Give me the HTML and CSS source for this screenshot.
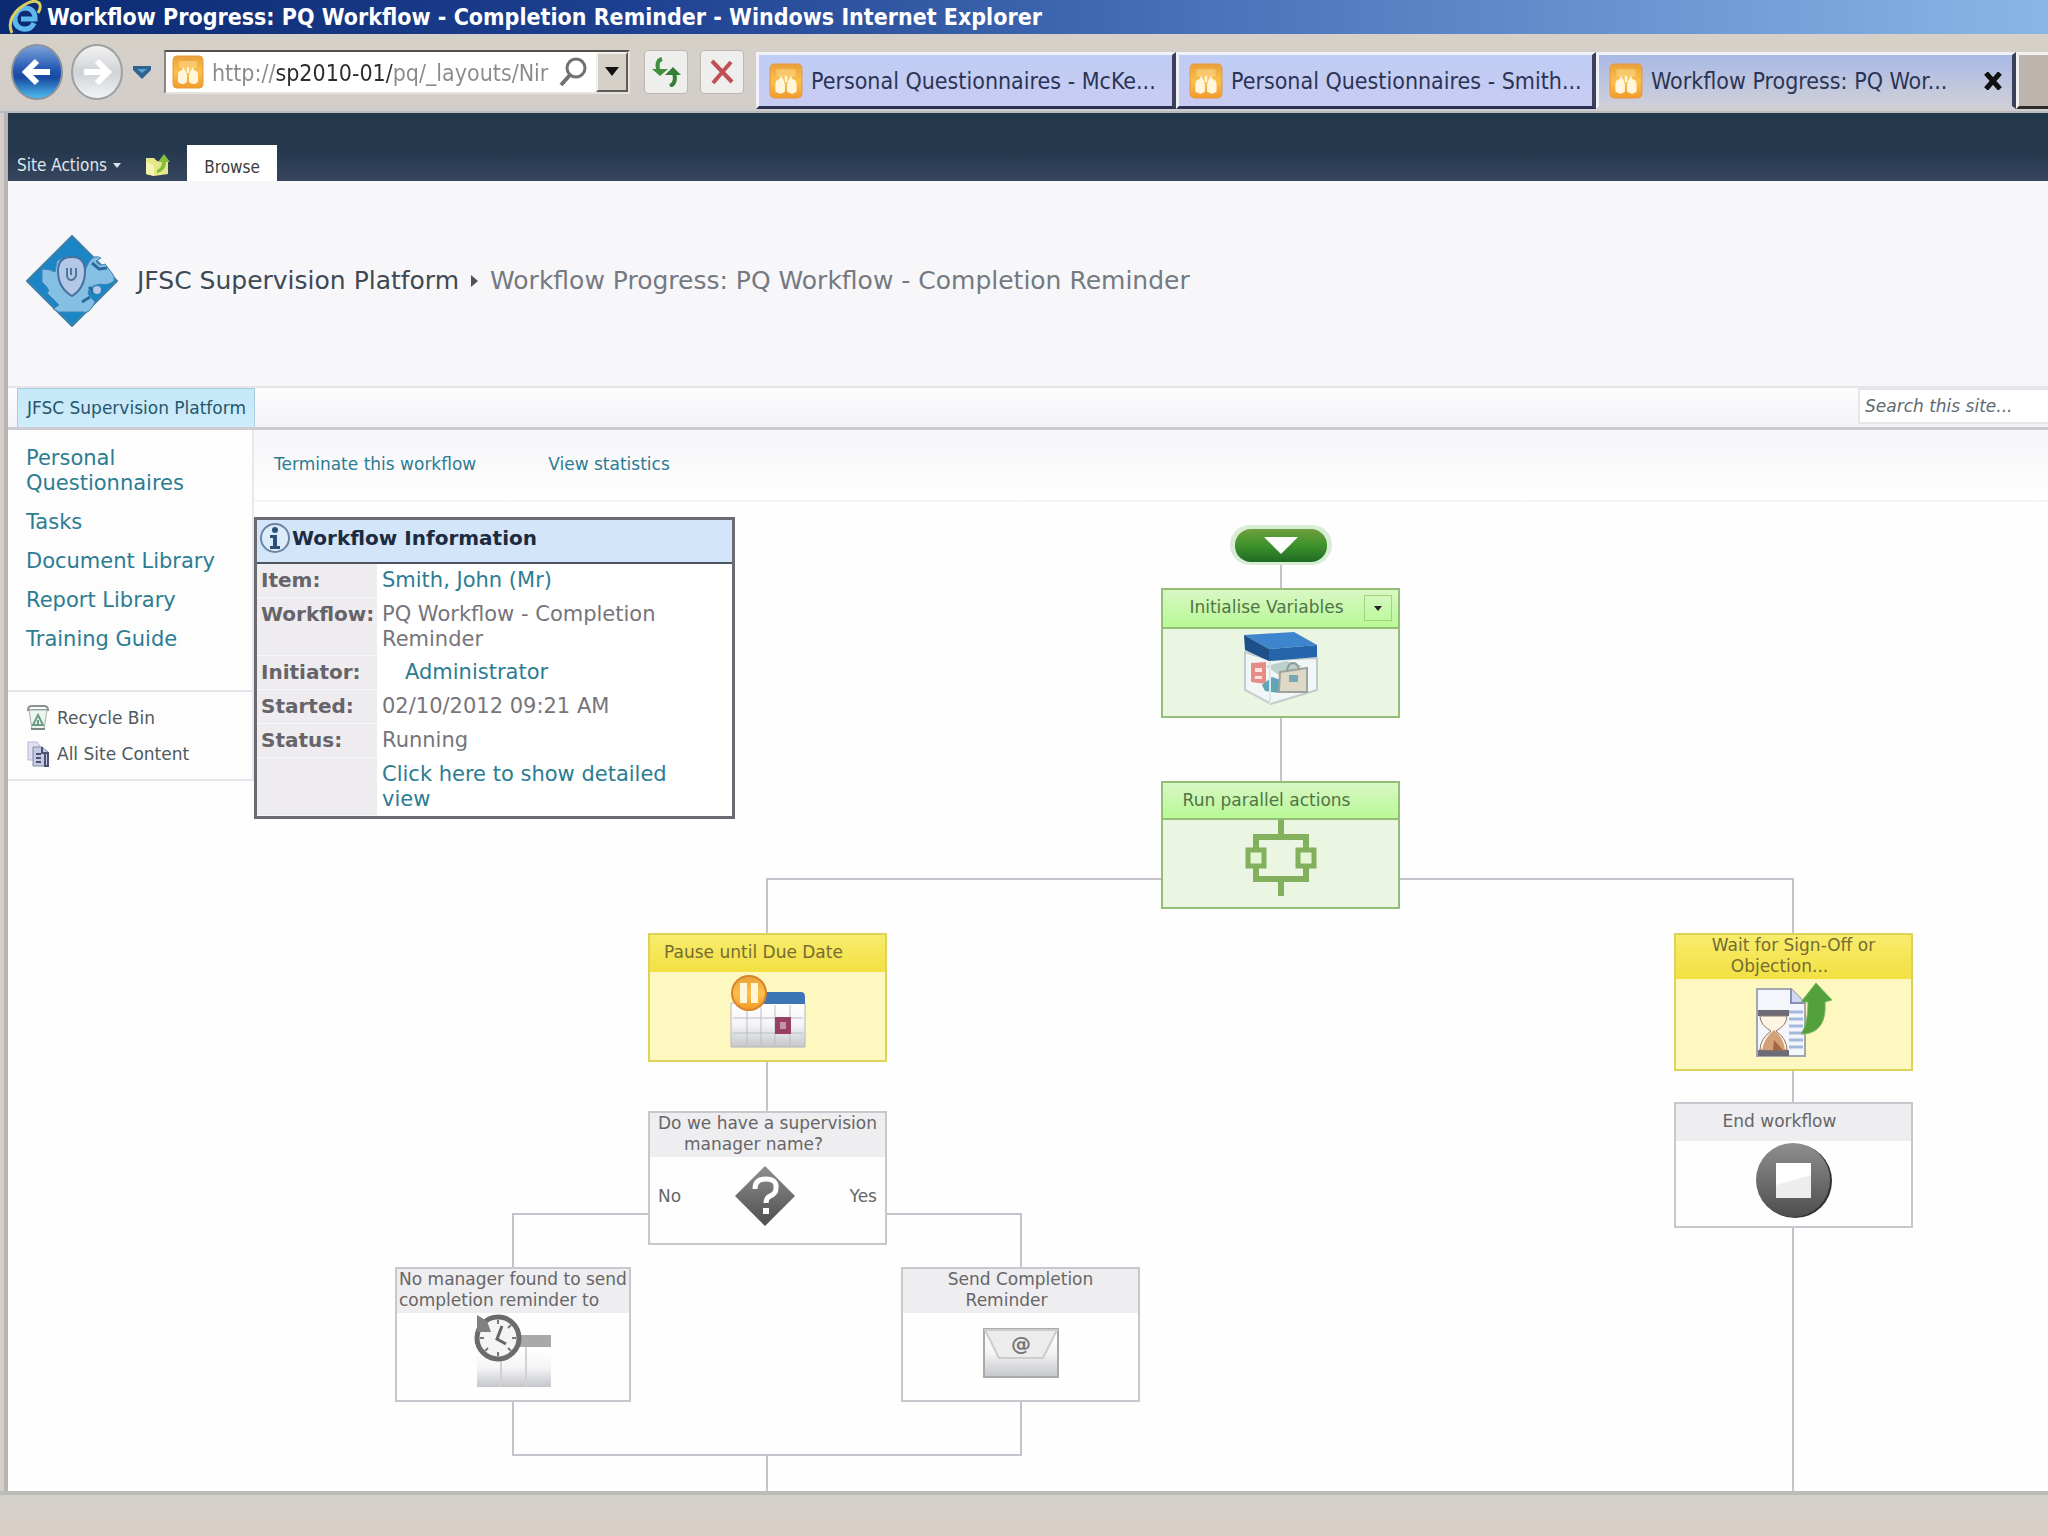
FILE: index.html
```html
<!DOCTYPE html>
<html lang="en">
<head>
    <meta charset="UTF-8">
    <meta name="viewport" content="width=device-width, initial-scale=1.0">
    <title>Workflow Progress: PQ Workflow - Completion Reminder</title>
    <link rel="stylesheet" href="styles.css">
</head>
<body>

<!-- shared gradients and the site icon -->
<svg class="defs" width="0" height="0" aria-hidden="true">
    <defs>
        <linearGradient id="g-orange" x1="0" y1="0" x2="0" y2="1">
            <stop offset="0" stop-color="#e9a03c"/>
            <stop offset="0.5" stop-color="#fbc04a"/>
            <stop offset="1" stop-color="#f39a2c"/>
        </linearGradient>
        <linearGradient id="g-back" x1="0" y1="0" x2="0" y2="1">
            <stop offset="0" stop-color="#7da4dc"/>
            <stop offset="0.45" stop-color="#2458b4"/>
            <stop offset="0.6" stop-color="#174a9f"/>
            <stop offset="1" stop-color="#4fc0f2"/>
        </linearGradient>
        <linearGradient id="g-fwd" x1="0" y1="0" x2="0" y2="1">
            <stop offset="0" stop-color="#f4f4f4"/>
            <stop offset="0.5" stop-color="#cfd2d6"/>
            <stop offset="1" stop-color="#f3f5f7"/>
        </linearGradient>
        <linearGradient id="g-green" x1="0" y1="0" x2="0" y2="1">
            <stop offset="0" stop-color="#6f9f3c"/>
            <stop offset="0.5" stop-color="#3d922b"/>
            <stop offset="1" stop-color="#1f6a24"/>
        </linearGradient>
        <linearGradient id="g-grey" x1="0" y1="0" x2="0" y2="1">
            <stop offset="0" stop-color="#8e8e8e"/>
            <stop offset="1" stop-color="#4e4e4e"/>
        </linearGradient>
        <linearGradient id="g-paper" x1="0" y1="0" x2="0" y2="1">
            <stop offset="0" stop-color="#ffffff"/>
            <stop offset="0.5" stop-color="#f4f4f6"/>
            <stop offset="1" stop-color="#c4c6cb"/>
        </linearGradient>
    </defs>
    <symbol id="site-icon" viewBox="0 0 32 34">
        <rect x="1" y="1" width="30" height="32" rx="4" fill="url(#g-orange)" stroke="#e8983a" stroke-width="1"/>
        <path d="M7 6h18v7h-4l-5 4-5-4H7z" fill="#fbd27c" opacity="0.7"/>
        <path d="M6 27v-7q0-4 4-5l1-3 2 3q2 2 2 5v7q-4 4-9 0z" fill="#fff6dc"/>
        <path d="M17 27v-7q0-3 2-5l2-3 1 3q4 1 4 5v7q-4 4-9 0z" fill="#fff6dc"/>
        <path d="M15 12h2v6h-2z" fill="#fff6dc"/>
    </symbol>
</svg>

<div class="titlebar">
    <svg width="34" height="34" viewBox="0 0 34 34" aria-hidden="true">
        <path d="M26 23q-3 7-11 6-9-2-8-12 2-9 11-9 9 1 9 11H13" fill="none" stroke="#5cb8ee" stroke-width="5"/>
        <path d="M4 33Q-2 20 12 8 25-2 31 3q3 4-1 10" fill="none" stroke="#d9cf5a" stroke-width="3"/>
    </svg>
    <span>Workflow Progress: PQ Workflow - Completion Reminder - Windows Internet Explorer</span>
</div>

<div class="toolbar">
    <button class="nav-btn" aria-label="Back">
        <svg width="54" height="56" viewBox="0 0 54 56">
            <ellipse cx="27" cy="28" rx="25" ry="27" fill="url(#g-back)" stroke="#8a929e" stroke-width="2"/>
            <path d="M40 28H17M27 17L16 28l11 11" fill="none" stroke="#fff" stroke-width="6"/>
        </svg>
    </button>
    <button class="nav-btn" aria-label="Forward">
        <svg width="54" height="56" viewBox="0 0 54 56">
            <ellipse cx="27" cy="28" rx="25" ry="27" fill="url(#g-fwd)" stroke="#9d9fa3" stroke-width="2"/>
            <path d="M14 28h23M27 17l11 11-11 11" fill="none" stroke="#fff" stroke-width="6"/>
        </svg>
    </button>
    <button class="history-btn" aria-label="Recent pages">
        <svg width="20" height="14" viewBox="0 0 20 14">
            <path d="M1 1h18v4l-9 9-9-9z" fill="#2f6391"/>
            <path d="M5 4h10l-5 4z" fill="#5aa3cf"/>
        </svg>
    </button>
    <div class="address">
        <svg class="address-icon" width="32" height="34"><use href="#site-icon"/></svg>
        <input class="address-input" type="text" aria-label="Address" value="http://sp2010-01/pq/_layouts/Nir">
        <svg width="30" height="30" viewBox="0 0 30 30" aria-hidden="true">
            <circle cx="18" cy="11" r="9" fill="none" stroke="#74706f" stroke-width="3"/>
            <path d="M12 18L3 28" stroke="#74706f" stroke-width="4"/>
        </svg>
        <button class="address-drop" aria-label="Show addresses">
            <svg width="14" height="9" viewBox="0 0 14 9"><path d="M0 0h14L7 9z" fill="#111"/></svg>
        </button>
    </div>
    <button class="tool-btn" aria-label="Refresh">
        <svg width="32" height="30" viewBox="0 0 32 30">
            <path d="M12 2Q5 4 9 15" fill="none" stroke="#3f8f3c" stroke-width="4"/>
            <path d="M2 12h16l-8 7z" fill="#3f8f3c"/>
            <path d="M20 29q7-3 4-13" fill="none" stroke="#357f34" stroke-width="4"/>
            <path d="M15 18l8-8 8 8z" fill="#357f34"/>
        </svg>
    </button>
    <button class="tool-btn" aria-label="Stop">
        <svg width="26" height="26" viewBox="0 0 26 26">
            <path d="M3 2l20 21M22 3L4 24" stroke="#c24d55" stroke-width="4"/>
        </svg>
    </button>
    <div class="tabs">
        <a class="tab" href="#"><svg width="34" height="36"><use href="#site-icon"/></svg><span>Personal Questionnaires - McKe...</span></a>
        <a class="tab" href="#"><svg width="34" height="36"><use href="#site-icon"/></svg><span>Personal Questionnaires - Smith...</span></a>
        <div class="tab tab-active">
            <svg width="34" height="36"><use href="#site-icon"/></svg>
            <span>Workflow Progress: PQ Wor...</span>
            <button class="tab-close" aria-label="Close tab">
                <svg width="18" height="18" viewBox="0 0 18 18"><path d="M2 1l14 16M16 1L2 17" stroke="#111" stroke-width="5"/></svg>
            </button>
        </div>
        <button class="tab-new" aria-label="New tab"></button>
    </div>
</div>

<div class="page">
    <div class="ribbon">
        <button class="site-actions">Site Actions
            <svg width="8" height="5" viewBox="0 0 8 5"><path d="M0 0h8L4 5z" fill="#dfe5ec"/></svg>
        </button>
        <button class="ribbon-icon" aria-label="Navigate up">
            <svg width="26" height="24" viewBox="0 0 26 24">
                <path d="M1 5h8l3 3h11v13l-14 2-8-2z" fill="#e4e887"/>
                <path d="M1 9l8 3v11l-8-2z" fill="#f6f4b2"/>
                <path d="M12 17q5-2 5-8h-4l6-8 6 8h-4q0 9-9 11z" fill="#86bd3f"/>
            </svg>
        </button>
        <a class="ribbon-tab" href="#">Browse</a>
    </div>

    <div class="header">
        <svg class="logo" width="92" height="92" viewBox="0 0 92 92" aria-hidden="true">
            <path d="M46 1l45 45-45 45L1 46z" fill="#1a86c5" stroke="#3f7fa8" stroke-width="2"/>
            <path d="M16 34q8 0 13 3l2-11q12-9 25 0l3 9 4-8q5-8 12-4l-5 3q3 6 9 3l7 9q3 3 2 8-6 5-14 3-12 2-12 10l7 8q-6 13-12 10H33l-6-3 6-4-12-12q5-2-5-11z" fill="#85bfe3" stroke="#3d83b5" stroke-width="1"/>
            <path d="M46 22q13 0 13 14 0 17-13 25-14-8-14-25 0-14 14-14z" fill="#b2c8e6" stroke="#456f9e" stroke-width="2"/>
            <path d="M41 33v8q1 4 4 4t5-4v-8M45 33v7" fill="none" stroke="#51779f" stroke-width="2"/>
            <path d="M66 28l7 6 8-1M63 52l6 6 6-4M56 67l8-5" fill="none" stroke="#2a6b9e" stroke-width="3"/>
            <circle cx="71" cy="55" r="4" fill="#b2c8e6"/>
        </svg>
        <div class="breadcrumb">
            <a href="#">JFSC Supervision Platform</a>
            <svg width="7" height="12" viewBox="0 0 7 12"><path d="M0 0l7 6-7 6z" fill="#4c535c"/></svg>
            <span>Workflow Progress: PQ Workflow - Completion Reminder</span>
        </div>
    </div>

    <div class="topnav">
        <a class="topnav-item" href="#">JFSC Supervision Platform</a>
        <input class="search" type="text" aria-label="Search this site" placeholder="Search this site...">
    </div>

    <div class="main">
        <div class="sidebar">
            <ul class="side-links">
                <li><a href="#">Personal Questionnaires</a></li>
                <li><a href="#">Tasks</a></li>
                <li><a href="#">Document Library</a></li>
                <li><a href="#">Report Library</a></li>
                <li><a href="#">Training Guide</a></li>
            </ul>
            <ul class="side-tools">
                <li>
                    <svg width="22" height="26" viewBox="0 0 22 26">
                        <path d="M1 5q0-4 4-4h12q4 0 4 4z" fill="#fff" stroke="#8b9396" stroke-width="2"/>
                        <path d="M2 5h18l-3 19H5z" fill="#edf5f0" stroke="#a3b0ab" stroke-width="1"/>
                        <path d="M11 10l5 10H6zM11 15v4" fill="none" stroke="#6b9c80" stroke-width="2"/>
                        <path d="M4 24h14" stroke="#7c8886" stroke-width="2"/>
                    </svg>
                    <a href="#">Recycle Bin</a>
                </li>
                <li>
                    <svg width="22" height="26" viewBox="0 0 22 26">
                        <path d="M1 1h9l3 4v14H1z" fill="#dfe1f1" stroke="#b4b8d4"/>
                        <path d="M6 6h9l6 5v14H6z" fill="#c5c9e2" stroke="#8287ab"/>
                        <path d="M15 6v6h6v13h-3V13M9 13h5M9 17h5M9 21h5" fill="none" stroke="#4d5274" stroke-width="2"/>
                    </svg>
                    <a href="#">All Site Content</a>
                </li>
            </ul>
        </div>

        <div class="content">
            <div class="actions">
                <a href="#">Terminate this workflow</a>
                <a href="#">View statistics</a>
            </div>

            <div class="canvas">
                <div class="info">
                    <div class="info-title">
                        <svg width="32" height="32" viewBox="0 0 32 32" aria-hidden="true">
                            <circle cx="16" cy="16" r="14" fill="#dcecfb" stroke="#6b84a3" stroke-width="2"/>
                            <circle cx="16" cy="8" r="3" fill="#2b5079"/>
                            <path d="M11 13h7v11h3v3H11v-3h3v-8h-3z" fill="#2b5079"/>
                        </svg>
                        Workflow Information
                    </div>
                    <table class="info-table">
                        <tr><th>Item:</th><td><a href="#">Smith, John (Mr)</a></td></tr>
                        <tr><th>Workflow:</th><td>PQ Workflow - Completion Reminder</td></tr>
                        <tr><th>Initiator:</th><td class="initiator"><a href="#">Administrator</a></td></tr>
                        <tr><th>Started:</th><td>02/10/2012 09:21 AM</td></tr>
                        <tr><th>Status:</th><td>Running</td></tr>
                        <tr><th></th><td><a href="#">Click here to show detailed view</a></td></tr>
                    </table>
                </div>

                <!-- connectors between the actions -->
                <svg class="lines" width="1794" height="989" aria-hidden="true">
                    <g fill="none" stroke="#c6c2cc" stroke-width="2">
                        <path d="M1027 60v28M1027 214v68"/>
                        <path d="M908 377H513v56M1144 377h395v56"/>
                        <path d="M513 558v52M1539 567v34M1539 724v265"/>
                        <path d="M395 712H259v54M632 712h135v54"/>
                        <path d="M259 898v55h508v-55M513 953v36"/>
                    </g>
                </svg>

                <div class="start">
                    <svg width="104" height="42" viewBox="0 0 104 42" aria-hidden="true">
                        <rect x="1" y="1" width="102" height="40" rx="20" fill="#d8ecd6"/>
                        <rect x="6" y="5" width="92" height="33" rx="16" fill="url(#g-green)"/>
                        <path d="M35 13h34L52 30z" fill="#fff"/>
                    </svg>
                </div>

                <div class="node green init">
                    <div class="node-title">Initialise Variables<button class="menu" aria-label="Action menu"><svg width="8" height="5" viewBox="0 0 8 5"><path d="M0 0h8L4 5z" fill="#222"/></svg></button></div>
                    <div class="node-body">
                        <svg width="78" height="78" viewBox="0 0 78 78">
                            <path d="M3 22l24 8 48-2v32l-46 14L3 60z" fill="#f2f6f6" stroke="#c2cccc" stroke-width="2"/>
                            <path d="M9 33l15-1v22l-15-2z" fill="#e58c86"/>
                            <path d="M13 38h7v4h-7zM13 46h7v3h-7z" fill="#fbe3df"/>
                            <path d="M20 55l10-8 9 3-2 13-14-2z" fill="#5fa5b9"/>
                            <path d="M24 36l20-5 16 5-22 10z" fill="#bcd0cc"/>
                            <path d="M38 42l27-4v24H37z" fill="#ded8c6" stroke="#9da39d" stroke-width="2"/>
                            <path d="M45 41q1-8 6-8t6 7" fill="none" stroke="#8f9996" stroke-width="2"/>
                            <path d="M47 45h9v7h-9z" fill="#77a7b0"/>
                            <path d="M28 29v45" stroke="#dfe7e6" stroke-width="2"/>
                            <path d="M2 5l50-3 23 13-48 4z" fill="#3d86cd"/>
                            <path d="M2 5l25 14v12L3 20z" fill="#1d4f88"/>
                            <path d="M27 19l48-4v12l-48 4z" fill="#2565ac"/>
                        </svg>
                    </div>
                </div>

                <div class="node green run">
                    <div class="node-title">Run parallel actions<span class="menu-space"></span></div>
                    <div class="node-body">
                        <svg width="72" height="80" viewBox="0 0 72 80">
                            <path d="M36 0v18M11 30V17h50v13M11 48v11h50V48M36 59v17" fill="none" stroke="#82b05c" stroke-width="6"/>
                            <path d="M3 30h16v16H3zM53 30h16v16H53z" fill="#e4f7d4" stroke="#82b05c" stroke-width="5"/>
                        </svg>
                    </div>
                </div>

                <div class="node yellow pause">
                    <div class="node-title">Pause until Due Date<span class="menu-space"></span></div>
                    <div class="node-body">
                        <svg width="78" height="74" viewBox="0 0 78 74">
                            <path d="M2 28h74v44H2z" fill="url(#g-paper)" stroke="#b5b7bd" stroke-width="1"/>
                            <path d="M30 17h42q4 0 4 5v7H30z" fill="#3c74b5"/>
                            <path d="M4 43h70M4 58h70M18 30v40M32 30v40M46 30v40M61 30v40" stroke="#b9bdc9" stroke-width="1"/>
                            <path d="M46 42h16v17H46z" fill="#97405f"/>
                            <path d="M51 47h6v7h-6z" fill="#c893a8"/>
                            <circle cx="20" cy="18" r="17" fill="url(#g-orange)" stroke="#d9832b" stroke-width="2"/>
                            <path d="M11 8h7v20h-7zM22 8h7v20h-7z" fill="#fff6d8"/>
                        </svg>
                    </div>
                </div>

                <div class="node yellow wait">
                    <div class="node-title">Wait for Sign-Off or<br>Objection...<span class="menu-space"></span></div>
                    <div class="node-body">
                        <svg width="78" height="76" viewBox="0 0 78 76">
                            <path d="M2 7h34l14 14v53H2z" fill="#f4f6fb" stroke="#a2a5b2" stroke-width="2"/>
                            <path d="M36 7v14h14" fill="#cfdaf0" stroke="#8490b2" stroke-width="2"/>
                            <path d="M34 30h14M34 37h14M34 44h14M34 51h14M34 58h14M34 65h14" stroke="#a3b8dd" stroke-width="3"/>
                            <path d="M46 52q7-10 7-32H46L61 1l16 17-7 2q2 29-20 32z" fill="#53a13d" stroke="#7fb867" stroke-width="1"/>
                            <path d="M3 28h31v6H3zM3 68h31v6H3z" fill="#6d6c74"/>
                            <path d="M5 34h27q0 9-11 15 11 8 11 19H5q0-11 11-19Q5 43 5 34z" fill="#fdf4e4" stroke="#8c7a6c" stroke-width="1"/>
                            <path d="M19 48q10 8 11 20H7q2-12 12-20z" fill="#d3a077"/>
                            <path d="M19 58l9 10H18z" fill="#a4673f"/>
                        </svg>
                    </div>
                </div>

                <div class="node grey end">
                    <div class="node-title">End workflow<span class="menu-space"></span></div>
                    <div class="node-body">
                        <svg width="78" height="78" viewBox="0 0 78 78">
                            <circle cx="40" cy="40" r="37" fill="#333"/>
                            <circle cx="38" cy="39" r="37" fill="url(#g-grey)"/>
                            <path d="M21 22h35v35H21z" fill="#ededed"/>
                            <path d="M21 22h35v12L21 44z" fill="#fff"/>
                        </svg>
                    </div>
                </div>

                <div class="node grey decision">
                    <div class="node-title">Do we have a supervision<br>manager name?<span class="menu-space"></span></div>
                    <div class="node-body">
                        <span>No</span>
                        <svg width="62" height="62" viewBox="0 0 62 62">
                            <path d="M31 1l30 30-30 30L1 31z" fill="url(#g-grey)"/>
                            <path d="M21 24q0-10 11-10t10 9q0 6-6 8-4 2-4 7" fill="none" stroke="#fff" stroke-width="5"/>
                            <path d="M29 43h6v6h-6z" fill="#fff"/>
                        </svg>
                        <span>Yes</span>
                    </div>
                </div>

                <div class="node grey nomanager">
                    <div class="node-title">No manager found to send<br>completion reminder to<span class="menu-space"></span></div>
                    <div class="node-body">
                        <svg width="78" height="76" viewBox="0 0 78 76">
                            <path d="M3 36h74v38H3z" fill="url(#g-paper)"/>
                            <path d="M44 22h33v12H44z" fill="#a9a9a9"/>
                            <path d="M27 34v40M52 34v40" stroke="#d2d2d2" stroke-width="2"/>
                            <circle cx="24" cy="25" r="21" fill="#f4f4f4" stroke="#6b6b6b" stroke-width="5"/>
                            <path d="M3 2v17h14L13 8z" fill="#808080"/>
                            <path d="M28 13l-5 13 9 5" fill="none" stroke="#666" stroke-width="3"/>
                            <path d="M24 7v4M24 39v4M6 25h4M38 25h4M11 38l3-3M37 38l-3-3M37 12l-3 3" stroke="#777" stroke-width="2"/>
                        </svg>
                    </div>
                </div>

                <div class="node grey send">
                    <div class="node-title">Send Completion<br>Reminder<span class="menu-space"></span></div>
                    <div class="node-body">
                        <svg width="76" height="50" viewBox="0 0 76 50">
                            <path d="M1 1h74v48H1z" fill="url(#g-paper)" stroke="#a9a9a9" stroke-width="2"/>
                            <path d="M2 2l14 28h44L74 2z" fill="#ececec" stroke="#cdcdcd" stroke-width="2"/>
                            <text x="38" y="23" class="at">@</text>
                        </svg>
                    </div>
                </div>
            </div>
        </div>
    </div>
</div>

<div class="statusbar"></div>

</body>
</html>
```
FILE: styles.css
```css
* {
    box-sizing: border-box;
}
body {
    margin: 0;
    min-height: 100vh;
    display: flex;
    flex-direction: column;
    background: #d6cec9;
    font-family: "DejaVu Sans", Verdana, sans-serif;
    font-size: 17px;
    color: #5c5c5c;
    overflow-x: hidden;
}
button {
    font: inherit;
    padding: 0;
    border: none;
    background: none;
}
a {
    color: #2c7c92;
    text-decoration: none;
}
svg {
    display: block;
    flex: none;
}
.defs {
    position: absolute;
}

/* browser window */
.titlebar {
    height: 34px;
    padding-left: 8px;
    display: flex;
    align-items: center;
    gap: 5px;
    background: linear-gradient(to right, #0b2a72, #1c3f8f 30%, #4a74bb 60%, #8ab6e6);
    color: #fff;
    font-family: "DejaVu Sans Condensed", "DejaVu Sans", sans-serif;
    font-stretch: condensed;
    font-size: 23px;
    font-weight: bold;
    line-height: 30px;
    white-space: nowrap;
}
.toolbar {
    height: 79px;
    padding: 0 0 2px 10px;
    display: flex;
    align-items: center;
    background: linear-gradient(#d5d1c8, #d3cdca);
    border-bottom: 2px solid #b5bbc0;
    font-family: "DejaVu Sans Condensed", "DejaVu Sans", sans-serif;
    font-stretch: condensed;
}
.nav-btn {
    margin-right: 6px;
}
.history-btn {
    margin-left: 2px;
}
.address {
    width: 466px;
    height: 44px;
    margin: 0 14px 0 12px;
    padding-left: 6px;
    display: flex;
    align-items: center;
    gap: 8px;
    background: #fff;
    border: 2px solid #8a8583;
    border-top-color: #55504e;
    border-right-color: #e6e2de;
    border-bottom-color: #e6e2de;
}
.address-input {
    flex: 1;
    min-width: 0;
    padding: 2px 0 0;
    border: none;
    font: inherit;
    font-size: 23px;
    color: transparent;
    background: linear-gradient(to right, #8d8988 64px, #2b2b2b 64px, #2b2b2b 181px, #8d8988 181px);
    -webkit-background-clip: text;
    background-clip: text;
}
.address-drop {
    width: 32px;
    height: 40px;
    display: flex;
    align-items: center;
    justify-content: center;
    background: #d5d0c8;
    border: 2px solid #f2f0ec;
    border-right-color: #5f5a58;
    border-bottom-color: #5f5a58;
}
.tool-btn {
    width: 44px;
    height: 44px;
    margin-right: 12px;
    display: flex;
    align-items: center;
    justify-content: center;
    background: #eeeeed;
    border: 1px solid #bbb8b5;
    border-radius: 4px;
}
.tabs {
    flex: 1;
    min-width: 0;
    display: flex;
    align-self: stretch;
    padding-top: 18px;
    overflow: hidden;
}
.tab {
    flex: 0 0 420px;
    padding: 0 10px;
    display: flex;
    align-items: center;
    gap: 8px;
    background: linear-gradient(#bfcdf4, #c8cbf2);
    border: solid #f1f1f8;
    border-width: 3px 4px 3px 3px;
    border-right-color: #3b4158;
    border-bottom-color: #2a3253;
    color: #2b3453;
    font-size: 23px;
    white-space: nowrap;
}
.tab-active {
    background: linear-gradient(#a9b9e6, #cfcfd8);
    border-bottom-color: #cfcfd8;
}
.tab-close {
    margin-left: auto;
}
.tab-new {
    flex: 1;
    background: #bdb5ad;
    border: solid #f1f1f0;
    border-width: 3px 0 3px 3px;
    border-bottom-color: #2b2b2b;
}
.statusbar {
    height: 45px;
    border-top: 4px solid #bcbcb7;
    background: linear-gradient(#d2d0ca, #d7cec8 60%);
}

/* site */
.page {
    flex: 1;
    margin-left: 4px;
    display: flex;
    flex-direction: column;
    background: #fefefe;
    border-left: 4px solid #b9b4b4;
}
.ribbon {
    height: 68px;
    padding-left: 9px;
    display: flex;
    align-items: flex-end;
    background: linear-gradient(#24384b, #26394f 60%, #37465f);
    font-family: "DejaVu Sans Condensed", "DejaVu Sans", sans-serif;
    font-stretch: condensed;
}
.site-actions {
    height: 32px;
    display: flex;
    align-items: center;
    gap: 6px;
    color: #dfe5ec;
}
.ribbon-icon {
    height: 32px;
    margin: 0 16px 0 24px;
}
.ribbon-tab {
    width: 90px;
    height: 36px;
    padding-top: 6px;
    line-height: 32px;
    text-align: center;
    background: #fff;
    color: #3c3c3c;
}
.header {
    height: 205px;
    padding: 0 18px 6px;
    display: flex;
    align-items: center;
    gap: 19px;
    background: #f7f7fa;
}
.breadcrumb {
    display: flex;
    align-items: center;
    gap: 12px;
    font-size: 25px;
    color: #757980;
}
.breadcrumb a {
    color: #3d4954;
}
.topnav {
    height: 44px;
    padding-left: 9px;
    display: flex;
    justify-content: space-between;
    border-top: 2px solid #e6e6ea;
    border-bottom: 3px solid #cdcdd1;
    background: linear-gradient(#fdfdfe, #f3f2f6);
}
.topnav-item {
    padding: 0 8px 0 9px;
    line-height: 38px;
    background: linear-gradient(#c5e8f8, #cfecfb);
    border: 1px solid #a9cede;
    border-bottom: none;
    color: #24566d;
}
.search {
    width: 190px;
    height: 36px;
    padding: 0 5px;
    border: 2px solid #e6e6ea;
    border-right: none;
    background: #fff;
    font: italic 17px "DejaVu Sans", Verdana, sans-serif;
}
.search::placeholder {
    color: #5e6b70;
    opacity: 1;
}
.main {
    flex: 1;
    display: flex;
}
.sidebar {
    flex: 0 0 246px;
    align-self: flex-start;
    border-right: 2px solid #e9e8ee;
    background: #fdfdfe;
}
.side-links, .side-tools {
    margin: 0;
    padding: 0;
    list-style: none;
}
.side-links {
    height: 260px;
    padding: 16px 30px 0 18px;
    font-size: 21px;
    line-height: 25px;
}
.side-links li {
    margin-bottom: 14px;
}
.side-tools {
    padding: 8px 0 7px 19px;
    border-top: 2px solid #e6e6ea;
    border-bottom: 2px solid #e6e6ea;
}
.side-tools li {
    height: 36px;
    display: flex;
    align-items: center;
    gap: 8px;
}
.side-tools a {
    color: #4f585c;
}
.content {
    flex: 1;
    min-width: 0;
    display: flex;
    flex-direction: column;
}
.actions {
    height: 72px;
    padding: 0 0 2px 20px;
    display: flex;
    align-items: center;
    gap: 72px;
    border-bottom: 2px solid #f4f3f6;
    background: linear-gradient(#f6f6f9, #fefefe);
}
.canvas {
    flex: 1;
    position: relative;
    padding-top: 15px;
    overflow: hidden;
}

/* workflow information */
.info {
    width: 481px;
    border: 3px solid #6a6a70;
    background: #fff;
}
.info-title {
    height: 44px;
    padding: 0 0 6px 2px;
    display: flex;
    align-items: center;
    gap: 1px;
    background: #d2e5f9;
    border-bottom: 2px solid #4d5560;
    color: #1d2b40;
    font-size: 20px;
    font-weight: bold;
}
.info-table {
    width: 100%;
    border-collapse: collapse;
    line-height: 25px;
}
.info-table th, .info-table td {
    padding: 4px;
    text-align: left;
    vertical-align: top;
}
.info-table th {
    width: 120px;
    padding-right: 0;
    background: #eeecef;
    border-bottom: 1px solid #f7f6f8;
    font-size: 20px;
    color: #66646a;
}
.info-table td {
    padding-left: 5px;
    padding-right: 50px;
    font-size: 21px;
    color: #77757a;
}
.info-table .initiator {
    padding-left: 28px;
}

/* workflow diagram */
.lines {
    position: absolute;
    left: 0;
    top: 0;
}
.start, .node {
    position: absolute;
}
.start {
    left: 975px;
    top: 22px;
}
.node {
    width: 239px;
    display: flex;
    flex-direction: column;
    border: 2px solid;
    line-height: 21px;
}
.node-title {
    display: block;
    min-height: 37px;
    padding: 7px 0 9px;
    text-align: center;
    white-space: nowrap;
}
.node-body {
    flex: 1;
    padding-bottom: 8px;
    display: flex;
    align-items: center;
    justify-content: center;
}
.menu, .menu-space {
    display: inline-block;
    width: 28px;
    height: 16px;
}
.menu {
    height: 26px;
    margin: -4px -20px -4px 20px;
    border: 1px solid #9fd47c;
    vertical-align: middle;
}
.menu svg {
    margin: 0 auto;
}
.green {
    border-color: #94bd78;
    background: #ebf6e2;
    color: #4f7447;
}
.green .node-title {
    background: linear-gradient(#d9f7c4, #b8f996);
    border-bottom: 2px solid #94bd78;
}
.yellow {
    border-color: #ded35a;
    background: #fdf8c0;
    color: #756c33;
}
.yellow .node-title {
    background: linear-gradient(#f8ec6c, #f3e042);
}
.grey {
    border-color: #c9c7cd;
    background: #fefefe;
    color: #666;
}
.grey .node-title {
    background: #eeedf0;
}
.init {
    left: 907px;
    top: 86px;
    height: 130px;
}
.run {
    left: 907px;
    top: 279px;
    height: 128px;
}
.pause {
    left: 394px;
    top: 431px;
    height: 129px;
}
.wait {
    left: 1420px;
    top: 431px;
    height: 138px;
}
.end {
    left: 1420px;
    top: 600px;
    height: 126px;
}
.decision {
    left: 394px;
    top: 609px;
    height: 134px;
}
.nomanager {
    left: 141px;
    top: 765px;
    width: 236px;
    height: 135px;
}
.send {
    left: 647px;
    top: 765px;
    height: 135px;
}
.wait .node-title, .decision .node-title, .nomanager .node-title, .send .node-title {
    padding: 0 0 2px;
}
.run .node-body, .nomanager .node-body {
    align-items: flex-start;
}
.decision .node-body {
    padding: 0 8px 8px;
    justify-content: space-between;
}
.at {
    font: bold 20px "DejaVu Sans", sans-serif;
    fill: #777;
    text-anchor: middle;
}
```
